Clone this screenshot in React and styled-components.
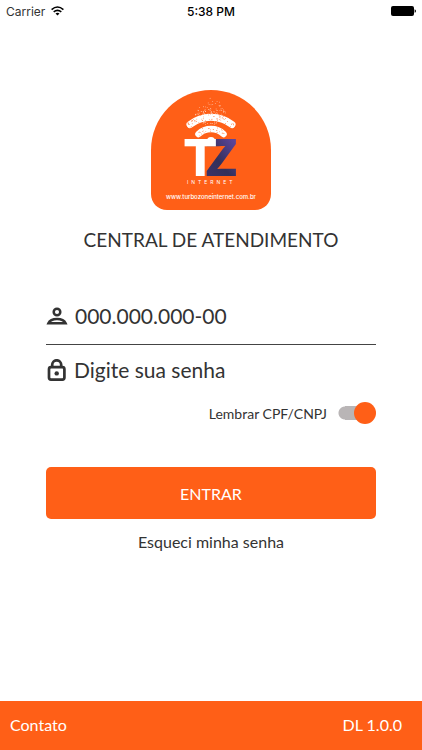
import { useState } from "react";
import styled, { createGlobalStyle } from "styled-components";

const ORANGE = "#ff5f17";
const DARK = "#333333";

const GlobalStyle = createGlobalStyle`
  * {
    box-sizing: border-box;
  }

  body {
    margin: 0;
    background-color: white;
    color: ${DARK};
    font-family: Lato, "Liberation Sans", sans-serif;
  }
`;

const Page = styled.div`
  min-height: 100vh;
  display: flex;
  flex-direction: column;
`;

const StatusBar = styled.header`
  display: grid;
  grid-template-columns: 1fr auto 1fr;
  align-items: center;
  height: 22px;
  padding: 0 6px;
  color: black;
  font-family: Inter, "Liberation Sans", sans-serif;
  font-size: 12px;
`;

const Carrier = styled.div`
  display: flex;
  align-items: center;
  gap: 6px;
  color: #333333;
`;

const Clock = styled.div`
  font-weight: 500;
`;

const Battery = styled.svg`
  justify-self: end;
`;

const Main = styled.main`
  flex: 1;
  display: flex;
  flex-direction: column;
  align-items: center;
  padding: 68px 46px 32px;
`;

const Title = styled.h1`
  margin: 18px 0 0;
  font-size: 19px;
  line-height: 24px;
  font-weight: 400;
`;

const Form = styled.form`
  width: 100%;
  margin-top: 39px;
  display: flex;
  flex-direction: column;
`;

const Field = styled.label`
  display: flex;
  align-items: center;
  gap: 7px;
  height: 54px;
  padding-bottom: 3px;
  border-bottom: 1px solid ${(props) => (props.$line ? "#444444" : "transparent")};
`;

const FieldIcon = styled.svg`
  flex: none;
`;

const Input = styled.input`
  flex: 1;
  min-width: 0;
  padding: 0;
  border: none;
  outline: none;
  background: none;
  color: ${DARK};
  font-family: inherit;
  font-size: 21px;
  line-height: 24px;

  &::placeholder {
    color: ${DARK};
    opacity: 1;
  }
`;

const Remember = styled.label`
  align-self: flex-end;
  display: flex;
  align-items: center;
  gap: 11px;
  height: 28px;
  font-size: 14px;
  cursor: pointer;
`;

const Switch = styled.input`
  appearance: none;
  display: flex;
  align-items: center;
  width: 38px;
  height: 22px;
  margin: 0;
  cursor: pointer;

  /* track */
  background:
    radial-gradient(circle at 7px 7px, #b9b5b6 6px, transparent 7px) left center / 8px 14px no-repeat,
    linear-gradient(#b9b5b6, #b9b5b6) 7px center / 22px 14px no-repeat;

  /* thumb */
  &::before {
    content: "";
    width: 22px;
    height: 22px;
    border-radius: 50%;
    background-color: #f1f1f1;
  }

  &:checked::before {
    margin-left: auto;
    background-color: ${ORANGE};
  }
`;

const SubmitButton = styled.button`
  height: 52px;
  margin-top: 40px;
  border: none;
  border-radius: 5px;
  background-color: ${ORANGE};
  color: white;
  font-family: inherit;
  font-size: 16px;
  cursor: pointer;
`;

const ForgotLink = styled.a`
  margin-top: 13px;
  color: ${DARK};
  font-size: 16px;
  line-height: 20px;
  text-decoration: none;
`;

const Footer = styled.footer`
  display: flex;
  justify-content: space-between;
  align-items: center;
  height: 49px;
  padding: 0 20px 2px 10px;
  background-color: ${ORANGE};
  color: white;
  font-size: 16px;
`;

const FooterLink = styled.a`
  color: inherit;
  text-decoration: none;
`;

// pseudo-random sequence, always the same so the speckles don't move between renders
const makeRandom = (seed) => () => {
  seed = (seed * 16807) % 2147483647;
  return seed / 2147483647;
};

const makeSpeckles = () => {
  const random = makeRandom(77);
  const holes = [];
  const dust = [];
  // orange holes inside the two waves
  const waves = [
    { cy: 61, radius: 34, spread: 0.72, count: 60 },
    { cy: 57, radius: 18, spread: 0.8, count: 28 },
  ];
  waves.forEach(({ cy, radius, spread, count }) => {
    for (let i = 0; i < count; i++) {
      const angle = (random() * 2 - 1) * spread;
      const r = radius + (random() - 0.5) * 6;
      holes.push([60 + Math.sin(angle) * r, cy - Math.cos(angle) * r]);
    }
  });
  // white dust rising above the waves
  for (let i = 0; i < 70; i++) {
    const height = random() * random() * 17;
    dust.push([60 + (random() - 0.5) * (32 - height), 25 - height]);
  }
  for (let i = 0; i < 14; i++) {
    dust.push([60 + (random() - 0.5) * 16, 35 - random() * 3]);
  }
  return { holes, dust };
};

const { holes, dust } = makeSpeckles();

function Logo() {
  return (
    <svg width="120" height="120" viewBox="0 0 120 120" role="img" aria-label="TZ Internet">
      <defs>
        <linearGradient id="zFill" gradientUnits="userSpaceOnUse" x1="54" x2="86" y1="80" y2="55">
          <stop offset="0" stopColor="#3b3266" />
          <stop offset="0.4" stopColor="#33305a" />
          <stop offset="1" stopColor="#5b459b" />
        </linearGradient>
      </defs>
      <path d="M0 60A60 60 0 0 1 120 60V104c0 9-7 16-16 16H16c-9 0-16-7-16-16z" fill={ORANGE} />
      <g fill="none" stroke="white" strokeLinecap="round">
        <path d="M39 34.500A34 34 0 0 1 81 34.500" strokeWidth="7" />
        <path d="M47.500 44A18 18 0 0 1 72.500 44" strokeWidth="6.500" />
      </g>
      <circle cx="60" cy="51" r="4" fill="white" />
      {holes.map(([x, y], i) => (
        <circle key={i} cx={x} cy={y} r="0.420" fill={ORANGE} />
      ))}
      {dust.map(([x, y], i) => (
        <circle key={i} cx={x} cy={y} r="0.400" fill="white" />
      ))}
      {/* the T lies over the left part of the Z */}
      <text y="86" fontFamily="Inter, sans-serif" fontWeight="800" fontSize="51">
        <tspan x="53" fill="url(#zFill)">Z</tspan>
        <tspan x="32" fill="white">T</tspan>
      </text>
      <text x="36" y="94" fill="white" fontFamily="Inter, sans-serif" fontSize="5" letterSpacing="3">
        INTERNET
      </text>
      <text x="60" y="109" fill="white" fontFamily="Inter, sans-serif" fontSize="6" fontWeight="500" textAnchor="middle">
        www.turbozoneinternet.com.br
      </text>
    </svg>
  );
}

function WifiIcon() {
  return (
    <svg width="13" height="10" viewBox="0 0 13 10" fill="none" stroke="black" strokeWidth="1.600">
      <path d="M0.600 3.600Q6.500-1.600 12.400 3.600" />
      <path d="M2.700 5.900Q6.500 2.700 10.300 5.900" />
      <path d="M6.500 9.600 4.500 7.500Q6.500 5.900 8.500 7.500z" fill="black" stroke="none" />
    </svg>
  );
}

function App() {
  const [remember, setRemember] = useState(true);

  return (
    <>
      <GlobalStyle />
      <Page>
        <StatusBar>
          <Carrier>
            Carrier
            <WifiIcon />
          </Carrier>
          <Clock>5:38 PM</Clock>
          <Battery width="25" height="10" viewBox="0 0 25 10">
            <rect width="23" height="10" rx="2" />
            <path d="M23.600 3.200q1.400.4 1.400 1.800t-1.400 1.800z" />
          </Battery>
        </StatusBar>

        <Main>
          <Logo />
          <Title>CENTRAL DE ATENDIMENTO</Title>

          <Form onSubmit={(e) => e.preventDefault()}>
            <Field $line>
              <FieldIcon width="22" height="18" viewBox="0 0 22 18" fill="none" stroke={DARK} strokeWidth="2.500">
                <circle cx="11" cy="5" r="3.300" />
                <path d="M2.400 16.200C3.700 13.200 7 11.900 11 11.900s7.300 1.300 8.600 4.300z" />
              </FieldIcon>
              <Input type="text" inputMode="numeric" aria-label="CPF/CNPJ" placeholder="000.000.000-00" />
            </Field>
            <Field>
              <FieldIcon width="21" height="22" viewBox="0 0 21 22" fill="none" stroke={DARK} strokeWidth="2.700">
                <rect x="3" y="8.200" width="15.400" height="12.400" rx="2" />
                <path d="M6.200 8V5.800a4.500 4.500 0 0 1 9 0V8" />
                <circle cx="10.700" cy="14.400" r="2.200" fill={DARK} stroke="none" />
              </FieldIcon>
              <Input type="password" aria-label="Senha" placeholder="Digite sua senha" />
            </Field>
            <Remember>
              Lembrar CPF/CNPJ
              <Switch
                type="checkbox"
                role="switch"
                checked={remember}
                onChange={(e) => setRemember(e.target.checked)}
              />
            </Remember>
            <SubmitButton type="submit">ENTRAR</SubmitButton>
          </Form>

          <ForgotLink href="#senha">Esqueci minha senha</ForgotLink>
        </Main>

        <Footer>
          <FooterLink href="#contato">Contato</FooterLink>
          <span>DL 1.0.0</span>
        </Footer>
      </Page>
    </>
  );
}

export default App;
